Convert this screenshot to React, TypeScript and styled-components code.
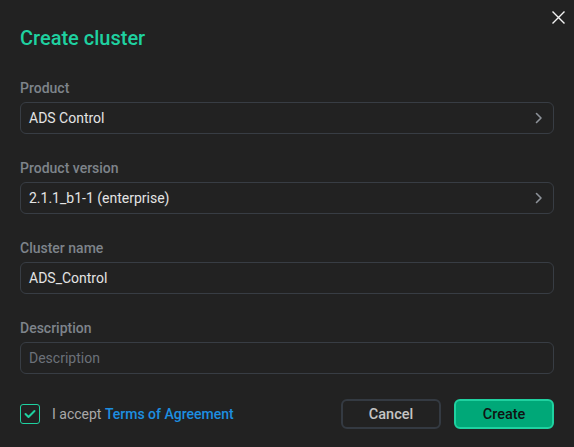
import styled, { createGlobalStyle } from 'styled-components';

const GlobalStyle = createGlobalStyle`
    html, body {
        margin: 0;
        padding: 0;
        background: #222222;
    }
    * {
        box-sizing: border-box;
    }
`;

interface FieldProps {
    label: string;
    value?: string;
    placeholder?: string;
    select?: boolean;
}

const Chevron = () => (
    <svg width='8' height='12' viewBox='0 0 8 12' fill='none'>
        <path d='M1.5 1.5L6 6L1.5 10.5' stroke='#8d9299' strokeWidth='1.6' strokeLinecap='round' strokeLinejoin='round' />
    </svg>
);

const Field = ({ label, value, placeholder, select }: FieldProps) => (
    <FieldGroup>
        <Label>{label}</Label>
        <InputBox>
            {value ? <Value>{value}</Value> : <Placeholder>{placeholder}</Placeholder>}
            {select && <Chevron />}
        </InputBox>
    </FieldGroup>
);

export default function App() {
    return (
        <Dialog>
            <GlobalStyle />
            <CloseButton aria-label='Close'>
                <svg width='13' height='13' viewBox='0 0 13 13'>
                    <path d='M1 1L12 12M12 1L1 12' stroke='#f2f2f2' strokeWidth='1.4' strokeLinecap='square' />
                </svg>
            </CloseButton>
            <Title>Create cluster</Title>
            <Fields>
                <Field label='Product' value='ADS Control' select />
                <Field label='Product version' value='2.1.1_b1-1 (enterprise)' select />
                <Field label='Cluster name' value='ADS_Control' />
                <Field label='Description' placeholder='Description' />
            </Fields>
            <Footer>
                <Agreement>
                    <CheckBox>
                        <svg width='12' height='10' viewBox='0 0 12 10' fill='none'>
                            <path d='M1.5 5L4.5 8L10.5 2' stroke='#1fd1a0' strokeWidth='2' strokeLinecap='round' strokeLinejoin='round' />
                        </svg>
                    </CheckBox>
                    <AgreeText>
                        I accept <Link>Terms of Agreement</Link>
                    </AgreeText>
                </Agreement>
                <Actions>
                    <Button>Cancel</Button>
                    <Button primary>Create</Button>
                </Actions>
            </Footer>
        </Dialog>
    );
}

const Dialog = styled.div`
    position: relative;
    width: 574px;
    height: 447px;
    padding: 26px 20px 0 20px;
    background: #222222;
    font-family: Roboto, 'Liberation Sans', sans-serif;
`;

const CloseButton = styled.div`
    position: absolute;
    top: 11px;
    right: 9px;
    width: 13px;
    height: 13px;
    display: flex;
`;

const Title = styled.h1`
    margin: 0;
    font-size: 20px;
    line-height: 24px;
    font-weight: 500;
    color: #1fd1a0;
`;

const Fields = styled.div`
    display: flex;
    flex-direction: column;
    gap: 24px;
    margin-top: 28px;
`;

const FieldGroup = styled.div`
    display: flex;
    flex-direction: column;
    gap: 4px;
`;

const Label = styled.div`
    font-size: 14px;
    line-height: 20px;
    font-weight: 500;
    color: #7e848b;
`;

const InputBox = styled.div`
    height: 32px;
    display: flex;
    align-items: center;
    justify-content: space-between;
    padding: 0 10px 0 8px;
    border: 1px solid #383d44;
    border-radius: 6px;
    background: #222222;
`;

const Value = styled.span`
    font-size: 14px;
    color: #e4e4e4;
`;

const Placeholder = styled.span`
    font-size: 14px;
    color: #6c7179;
`;

const Footer = styled.div`
    display: flex;
    align-items: center;
    justify-content: space-between;
    margin-top: 25px;
`;

const Agreement = styled.div`
    display: flex;
    align-items: center;
    gap: 12px;
`;

const CheckBox = styled.div`
    width: 20px;
    height: 20px;
    display: flex;
    align-items: center;
    justify-content: center;
    border: 1px solid #1fd1a0;
    border-radius: 3px;
`;

const AgreeText = styled.span`
    font-size: 14px;
    color: #a9a9a9;
`;

const Link = styled.span`
    color: #1d8fe0;
    font-weight: 500;
`;

const Actions = styled.div`
    display: flex;
    gap: 13px;
`;

const Button = styled.button<{ primary?: boolean }>`
    width: 100px;
    height: 30px;
    border-radius: 6px;
    font-family: Roboto, 'Liberation Sans', sans-serif;
    font-size: 14.5px;
    font-weight: 500;
    border: ${({ primary }) => (primary ? '2px solid #1fd1a0' : '2px solid #343a42')};
    background: ${({ primary }) => (primary ? '#00a878' : 'transparent')};
    color: ${({ primary }) => (primary ? '#111' : '#c4c4c4')};
    cursor: pointer;
`;
